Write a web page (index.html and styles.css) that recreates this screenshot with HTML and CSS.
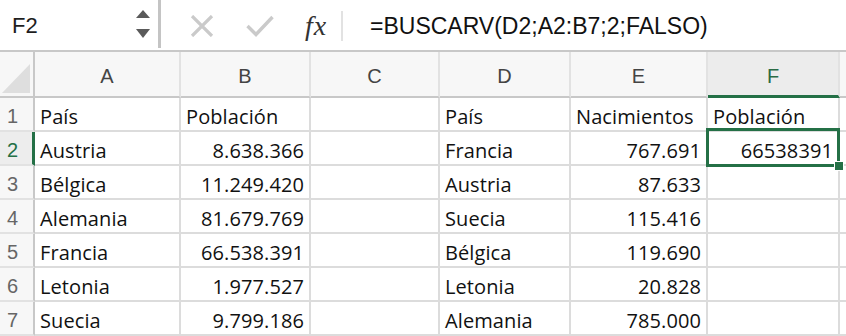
FILE: index.html
```html
<!DOCTYPE html>
<html lang="es">
<head>
<meta charset="utf-8">
<title>BUSCARV</title>
<link rel="stylesheet" href="styles.css">
</head>
<body>
<div class="app">
  <div class="fbar">
    <div class="namebox">
      <span class="name">F2</span>
      <svg class="spin" width="14" height="30" viewBox="0 0 14 30">
        <polygon points="7,0 14,8 0,8" fill="#5a5a5a"/>
        <polygon points="0,19 14,19 7,28" fill="#5a5a5a"/>
      </svg>
    </div>
    <div class="vsep"></div>
    <div class="tools">
      <svg class="ico-x" width="24" height="22" viewBox="0 0 24 22">
        <path d="M2 1 L22 21 M22 1 L2 21" stroke="#cacaca" stroke-width="3.2" fill="none"/>
      </svg>
      <svg class="ico-ok" width="28" height="22" viewBox="0 0 28 22">
        <path d="M1.5 11 L10 19.5 L26.5 2" stroke="#cacaca" stroke-width="3.4" fill="none"/>
      </svg>
      <span class="fx">fx</span>
      <div class="tsep"></div>
    </div>
    <div class="formula">=BUSCARV(D2;A2:B7;2;FALSO)</div>
  </div>
  <div class="sheet">
    <div class="corner">
      <svg width="34" height="44" viewBox="0 0 34 44"><polygon points="2,41 30,12 30,41" fill="#dedede"/></svg>
    </div>
    <div class="ch">A</div>
    <div class="ch">B</div>
    <div class="ch">C</div>
    <div class="ch">D</div>
    <div class="ch">E</div>
    <div class="ch ch-act">F</div>
    <div class="ch ch-last"></div>

    <div class="rh">1</div>
    <div class="c">País</div>
    <div class="c">Población</div>
    <div class="c"></div>
    <div class="c">País</div>
    <div class="c">Nacimientos</div>
    <div class="c">Población</div>
    <div class="c c-last"></div>

    <div class="rh rh-act">2</div>
    <div class="c">Austria</div>
    <div class="c n">8.638.366</div>
    <div class="c"></div>
    <div class="c">Francia</div>
    <div class="c n">767.691</div>
    <div class="c n c-sel">66538391<div class="sel"><span class="handle"></span></div></div>
    <div class="c c-last"></div>

    <div class="rh">3</div>
    <div class="c">Bélgica</div>
    <div class="c n">11.249.420</div>
    <div class="c"></div>
    <div class="c">Austria</div>
    <div class="c n">87.633</div>
    <div class="c"></div>
    <div class="c c-last"></div>

    <div class="rh">4</div>
    <div class="c">Alemania</div>
    <div class="c n">81.679.769</div>
    <div class="c"></div>
    <div class="c">Suecia</div>
    <div class="c n">115.416</div>
    <div class="c"></div>
    <div class="c c-last"></div>

    <div class="rh">5</div>
    <div class="c">Francia</div>
    <div class="c n">66.538.391</div>
    <div class="c"></div>
    <div class="c">Bélgica</div>
    <div class="c n">119.690</div>
    <div class="c"></div>
    <div class="c c-last"></div>

    <div class="rh">6</div>
    <div class="c">Letonia</div>
    <div class="c n">1.977.527</div>
    <div class="c"></div>
    <div class="c">Letonia</div>
    <div class="c n">20.828</div>
    <div class="c"></div>
    <div class="c c-last"></div>

    <div class="rh">7</div>
    <div class="c">Suecia</div>
    <div class="c n">9.799.186</div>
    <div class="c"></div>
    <div class="c">Alemania</div>
    <div class="c n">785.000</div>
    <div class="c"></div>
    <div class="c c-last"></div>
  </div>
</div>
</body>
</html>
```

FILE: styles.css
```css
* { box-sizing: border-box; }
html, body { margin: 0; padding: 0; background: #fff; }
body { width: 846px; height: 336px; overflow: hidden; }

.app { display: flex; flex-direction: column; }

.fbar {
  display: flex;
  align-items: stretch;
  height: 52px;
  border-bottom: 2px solid #c8c8c8;
  box-shadow: 0 1px 0 #e4e4e4;
  font-family: "Liberation Sans", Arial, sans-serif;
}
.namebox {
  width: 158px;
  display: flex;
  align-items: center;
  justify-content: space-between;
  padding: 2px 8px 0 12px;
}
.name { font-size: 22px; color: #1e1e1e; }
.spin { display: block; margin-top: -2px; }
.vsep { width: 3px; height: 48px; background: #c4c4c4; }
.tools {
  display: flex;
  align-items: center;
  width: 204px;
  padding-left: 29px;
  padding-top: 2px;
}
.ico-x { display: block; }
.ico-ok { display: block; margin-left: 32px; }
.fx {
  font-family: "Liberation Serif", "Times New Roman", serif;
  font-style: italic;
  font-size: 28px;
  color: #333;
  margin-left: 31px;
  letter-spacing: 1px;
}
.tsep { width: 2px; height: 30px; background: #e2e2e2; margin-left: 14px; }
.formula {
  display: flex;
  align-items: center;
  padding-left: 5px;
  padding-top: 3px;
  font-size: 23px;
  color: #111;
  flex: 1;
}

.sheet {
  display: grid;
  grid-template-columns: 35px 146px 130px 129px 131px 137px 132px 1fr;
  grid-template-rows: 46px repeat(7, 34px);
  font-family: "Open Sans", "Noto Sans", sans-serif;
}
.corner {
  background: #f7f7f7;
  border-right: 2px solid #c8c8c8;
  border-bottom: 2px solid #c8c8c8;
}
.corner svg { display: block; }
.ch {
  background: #f7f7f7;
  border-right: 2px solid #e2e2e2;
  border-bottom: 2px solid #c8c8c8;
  font-family: "Liberation Sans", Arial, sans-serif;
  font-size: 20px;
  color: #444;
  display: flex;
  align-items: center;
  justify-content: center;
  padding-top: 5px;
}
.ch-act {
  background: #ececec;
  color: #2a6b45;
  border-bottom: 3px solid #247046;
  padding-top: 6px;
}
.ch-last { border-right: none; }
.rh {
  background: #f7f7f7;
  border-right: 2px solid #c8c8c8;
  border-bottom: 2px solid #e2e2e2;
  font-family: "Liberation Sans", Arial, sans-serif;
  font-size: 20px;
  color: #666;
  padding-left: 7px;
  display: flex;
  align-items: center;
  padding-top: 4px;
}
.rh-act {
  color: #247046;
  background: #ededed;
  border-right: 3px solid #247046;
}
.c {
  border-right: 2px solid #dcdcdc;
  border-bottom: 2px solid #dcdcdc;
  font-size: 20px;
  color: #111;
  padding: 4px 5px 0 5px;
  display: flex;
  align-items: center;
  white-space: nowrap;
  letter-spacing: 0.1px;
}
.n { justify-content: flex-end; }
.c-last { border-right: none; }
.c-sel { position: relative; }
.sel {
  position: absolute;
  left: -2px;
  top: -4px;
  right: -2px;
  bottom: -3px;
  border: 3px solid #247046;
}
.handle {
  position: absolute;
  right: -7px;
  bottom: -7px;
  width: 10px;
  height: 10px;
  background: #247046;
  border: 1px solid #fff;
}
```
